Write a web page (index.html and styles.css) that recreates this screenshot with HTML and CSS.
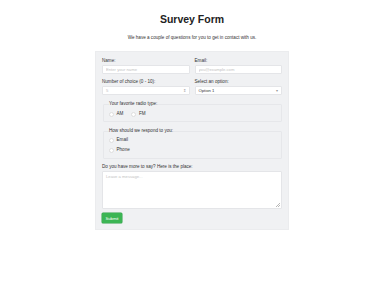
FILE: index.html
```html
<!DOCTYPE html>
<html lang="en">
<head>
    <meta charset="UTF-8">
    <meta name="viewport" content="width=device-width, initial-scale=1.0">
    <title>Survey Form</title>
    <link rel="stylesheet" href="styles.css">
</head>
<body>
    <h1>Survey Form</h1>
    <p class="intro">We have a couple of questions for you to get in contact with us.</p>

    <form class="survey">
        <div class="row">
            <div class="field">
                <label for="name">Name:</label>
                <input type="text" id="name" placeholder="Enter your name">
            </div>
            <div class="field">
                <label for="email">Email:</label>
                <input type="email" id="email" placeholder="you@example.com">
            </div>
        </div>

        <div class="row">
            <div class="field">
                <label for="number">Number of choice (0 - 10):</label>
                <div class="number-box">
                    <span class="placeholder">5</span>
                    <span class="spinner">&#8661;</span>
                </div>
            </div>
            <div class="field">
                <label for="option">Select an option:</label>
                <div class="select-box">
                    <span>Option 1</span>
                    <span class="caret">&#9662;</span>
                </div>
            </div>
        </div>

        <fieldset class="group">
            <legend>Your favorite radio type:</legend>
            <div class="inline">
                <label class="choice"><span class="radio"></span>AM</label>
                <label class="choice"><span class="radio"></span>FM</label>
            </div>
        </fieldset>

        <fieldset class="group">
            <legend>How should we respond to you:</legend>
            <label class="choice stacked"><span class="radio"></span>Email</label>
            <label class="choice stacked"><span class="radio"></span>Phone</label>
        </fieldset>

        <div class="field">
            <label for="message">Do you have more to say? Here is the place:</label>
            <div class="message-box">
                <span class="placeholder">Leave a message...</span>
                <svg class="grip" width="4" height="4" viewBox="0 0 4 4">
                    <path d="M0 4 L4 0 M2 4 L4 2" stroke="#888" stroke-width="0.6"/>
                </svg>
            </div>
        </div>

        <button type="button" class="submit">Submit</button>
    </form>
</body>
</html>
```

FILE: styles.css
```css
body {
    margin: 0;
    font-family: "Liberation Sans", Arial, sans-serif;
    background-color: #fff;
    color: #222;
}
h1 {
    text-align: center;
    font-size: 10.5px;
    margin: 13px 0 0;
    line-height: 12px;
    color: #222;
}
.intro {
    text-align: center;
    font-size: 4.6px;
    margin: 10px 0 0;
    line-height: 6px;
    color: #333;
}
.survey {
    width: 180px;
    margin: 10px auto 0;
    padding: 6px 6px 6px 6px;
    background-color: #f0f1f3;
    border: 0.5px solid #ebecee;
    font-size: 4.6px;
    color: #333;
}
.row {
    display: grid;
    grid-template-columns: 1fr 1fr;
    gap: 5px;
    margin-bottom: 5px;
}
.field label {
    display: block;
    line-height: 6px;
    margin-bottom: 1px;
}
.field input,
.number-box,
.select-box {
    box-sizing: border-box;
    width: 100%;
    height: 9px;
    border: 0.5px solid #e4e5e8;
    border-radius: 1px;
    background-color: #fff;
    font-family: inherit;
    font-size: 4.2px;
    padding: 0 3px;
    margin: 0;
    outline: none;
}
.field input::placeholder,
.placeholder {
    color: #c2c2c2;
}
.number-box,
.select-box {
    display: flex;
    align-items: center;
    justify-content: space-between;
}
.select-box {
    color: #333;
}
.spinner,
.caret {
    color: #999;
    font-size: 3.5px;
}
.group {
    border: 0.5px solid #e6e7ea;
    border-radius: 1px;
    margin: 6px 0 5px 1px;
    padding: 2px 5px 4px;
}
.group legend {
    padding: 0;
    line-height: 6px;
    color: #333;
}
.inline {
    display: flex;
    gap: 8px;
    margin-top: 2px;
}
.choice {
    display: flex;
    align-items: center;
    gap: 2.5px;
    line-height: 6px;
}
.stacked {
    margin-top: 4px;
}
.group legend + .stacked {
    margin-top: 1px;
}
.group .stacked:last-child {
    margin-bottom: 1px;
}
.radio {
    width: 3px;
    height: 3px;
    border: 0.5px solid #dedede;
    border-radius: 50%;
    background-color: #fff;
}
.message-box {
    position: relative;
    box-sizing: border-box;
    height: 38px;
    border: 0.5px solid #e4e5e8;
    border-radius: 1px;
    background-color: #fff;
    padding: 2px 3px;
    font-size: 4.2px;
}
.grip {
    position: absolute;
    right: 1px;
    bottom: 1px;
}
.submit {
    margin-top: 4px;
    background-color: #3cb554;
    color: #fff;
    border: none;
    border-radius: 1px;
    font-family: inherit;
    font-size: 4.2px;
    width: 20px;
    height: 10px;
    padding: 0;
    box-shadow: 0 0 0 0.5px #2ea046;
}
```
